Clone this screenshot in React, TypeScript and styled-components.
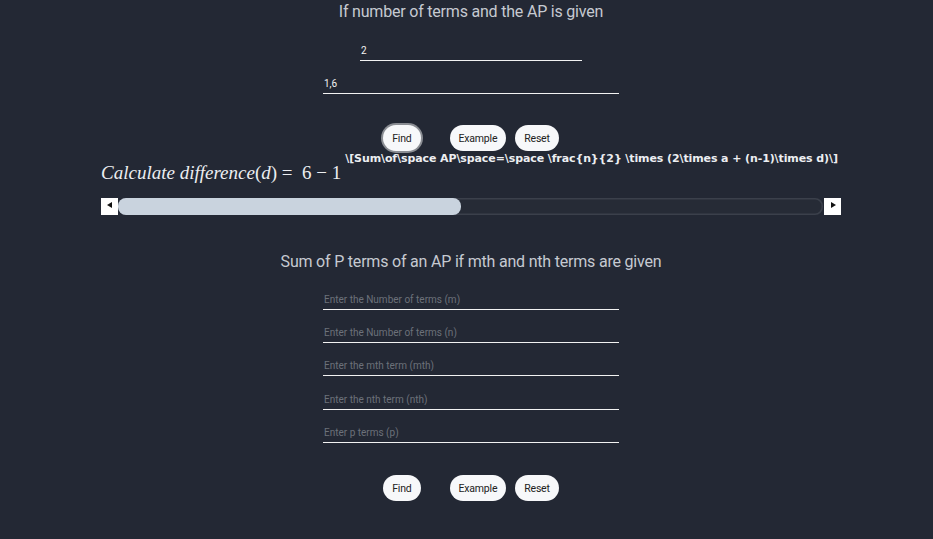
import React from 'react'
import styled, {createGlobalStyle} from 'styled-components'

const GlobalStyle = createGlobalStyle`
  body {
    margin: 0;
    background-color: #232834;
    font-family: Roboto, "Liberation Sans", sans-serif;
  }
  input::placeholder {
    color: #6c717a;
  }
`

const Page = styled.div`
  display: flex;
  flex-direction: column;
  align-items: center;
  padding-left: 9px;
  width: 933px;
  height: 539px;
  box-sizing: border-box;
  overflow: hidden;
`

const Title = styled.h2<{ $top: number }>`
  margin: ${p => p.$top}px 0 0 0;
  font-size: 16px;
  line-height: 20px;
  font-weight: 400;
  color: #c6cad1;
  letter-spacing: -0.2px;
`

const Field = styled.input<{ $width: number; $top: number }>`
  display: block;
  width: ${p => p.$width}px;
  margin-top: ${p => p.$top}px;
  height: 20px;
  padding: 0 1px;
  box-sizing: border-box;
  background: transparent;
  border: none;
  border-bottom: 1.5px solid #f2f2f2;
  outline: none;
  color: #f2f2f2;
  font-family: Roboto, "Liberation Sans", sans-serif;
  font-size: 10px;
`

const ButtonRow = styled.div<{ $top: number }>`
  display: flex;
  gap: 9px;
  margin-top: ${p => p.$top}px;
`

const PillButton = styled.button<{ $focused?: boolean; $gapAfter?: number }>`
  height: 26px;
  padding: 0 9px;
  border-radius: 13px;
  border: none;
  background: #f7f8fa;
  color: #222;
  font-family: Roboto, "Liberation Sans", sans-serif;
  font-size: 10.5px;
  letter-spacing: -0.2px;
  margin-right: ${p => p.$gapAfter ?? 0}px;
  box-shadow: ${p => (p.$focused ? '0 0 0 2px #8a8d93' : 'none')};
`

const MathBox = styled.div`
  width: 740px;
  height: 46px;
  overflow: hidden;
  white-space: nowrap;
  display: flex;
  align-items: flex-start;
`

const MathExpr = styled.span`
  margin-top: 11px;
  font-family: "Liberation Serif", "DejaVu Serif", serif;
  font-size: 19px;
  color: #eceef1;
  padding-right: 4px;
`

const Ital = styled.i`
  font-style: italic;
`

const RawLatex = styled.span`
  margin-top: 1px;
  font-family: "DejaVu Sans", sans-serif;
  font-weight: 700;
  font-size: 11px;
  letter-spacing: -0.1px;
  color: #eceef1;
`

const ScrollBar = styled.div`
  display: flex;
  width: 740px;
  height: 17px;
  margin-top: 1px;
`

const ArrowButton = styled.div`
  width: 17px;
  height: 17px;
  background: #ffffff;
  display: flex;
  align-items: center;
  justify-content: center;
  flex: none;
`

const Track = styled.div`
  flex: 1;
  display: flex;
  align-items: stretch;
  background: #262b36;
  border-radius: 8px;
  box-shadow: inset 0 0 0 1.5px #3b404b;
  margin-right: 1px;
`

const Thumb = styled.div`
  background: #c9d3de;
  border-radius: 8px;
`

const Tri = ({dir}: { dir: 'left' | 'right' }) => (
  <svg width="6" height="6" viewBox="0 0 6 6" style={{marginTop: -4}}>
    {dir === 'left'
      ? <polygon points="5,0 5,6 0,3" fill="#111"/>
      : <polygon points="1,0 1,6 6,3" fill="#111"/>}
  </svg>
)

const Buttons = ({top, focused}: { top: number; focused?: boolean }) => (
  <ButtonRow $top={top}>
    <PillButton $focused={focused} $gapAfter={20}>Find</PillButton>
    <PillButton>Example</PillButton>
    <PillButton>Reset</PillButton>
  </ButtonRow>
)

const App: React.FunctionComponent = () => {
  const thumbWidth = 343

  return (
    <Page>
      <GlobalStyle/>
      <Title $top={2}>If number of terms and the AP is given</Title>
      <Field $width={222} $top={19} defaultValue="2"/>
      <Field $width={296} $top={13} defaultValue="1,6"/>
      <Buttons top={31} focused/>
      <MathBox>
        <MathExpr>
          <Ital>Calculate difference</Ital>(<Ital>d</Ital>) =&nbsp; 6 − 1
        </MathExpr>
        <RawLatex>{'\\[Sum\\of\\space AP\\space=\\space \\frac{n}{2} \\times (2\\times a + (n-1)\\times d)\\]'}</RawLatex>
      </MathBox>
      <ScrollBar>
        <ArrowButton><Tri dir="left"/></ArrowButton>
        <Track>
          <Thumb style={{width: thumbWidth}}/>
        </Track>
        <ArrowButton><Tri dir="right"/></ArrowButton>
      </ScrollBar>
      <Title $top={37}>Sum of P terms of an AP if mth and nth terms are given</Title>
      <Field $width={296} $top={18} placeholder="Enter the Number of terms (m)"/>
      <Field $width={296} $top={13} placeholder="Enter the Number of terms (n)"/>
      <Field $width={296} $top={13} placeholder="Enter the mth term (mth)"/>
      <Field $width={296} $top={14} placeholder="Enter the nth term (nth)"/>
      <Field $width={296} $top={13} placeholder="Enter p terms (p)"/>
      <Buttons top={32}/>
    </Page>
  )
}

export default App
